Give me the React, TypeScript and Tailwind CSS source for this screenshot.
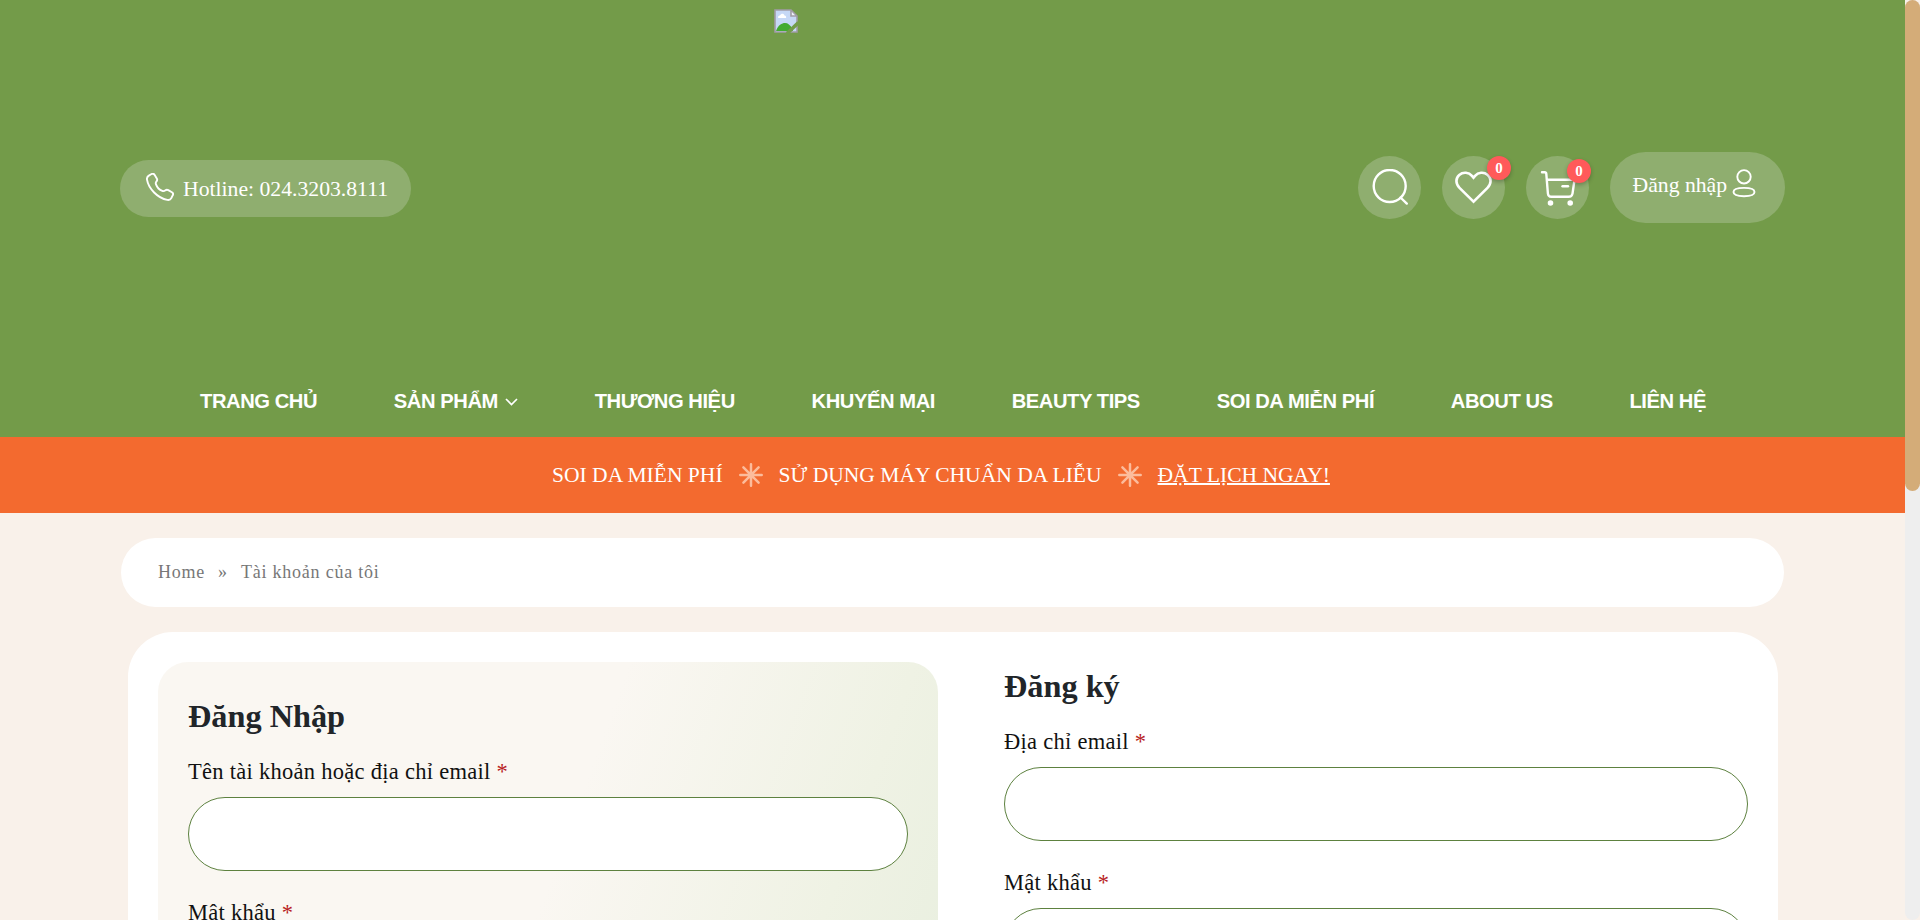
import React from "react";

const serif = "font-['Liberation_Serif',serif]";

const navItems = [
  { label: "TRANG CHỦ" },
  { label: "SẢN PHẨM", menu: true },
  { label: "THƯƠNG HIỆU" },
  { label: "KHUYẾN MẠI" },
  { label: "BEAUTY TIPS" },
  { label: "SOI DA MIỄN PHÍ" },
  { label: "ABOUT US" },
  { label: "LIÊN HỆ" },
];

function BrokenImage() {
  return (
    <svg width="24" height="24" viewBox="0 0 24 24" fill="none">
      <path d="M1 1H17L23 7V23H1Z" fill="#c6d8f6" />
      <path d="M2 22C4 16 8 14 11 14C14 14 16 16 18 19L19 22Z" fill="#43ab30" />
      <path d="M4 8.500C4 7 5 6.500 6 6.500C7 4 10 4 10.500 6.500C12 6.500 12.500 8 12 9H4.500Z" fill="#fff" />
      <path d="M17 1V7H23Z" fill="#eef2fa" />
      <path d="M17 1V7H23M17 1L23 7V23H1V1Z" stroke="#a19ca6" strokeWidth="1.600" />
      <path d="M24.500 13.500L13 24.500" stroke="#739b49" strokeWidth="3.600" />
    </svg>
  );
}

function PhoneIcon() {
  return (
    <svg width="28" height="28" viewBox="0 0 28 28" fill="none" stroke="#fff" strokeWidth="1.900" strokeLinejoin="round">
      <path d="M3.200 2.300L5.600 1C6.800 .4 8 .9 8.700 2L10.800 5.400C11.400 6.400 11.200 7.600 10.400 8.500C9.600 9.500 9.600 10.400 10 11.300C11 14 13.500 16.800 16.300 17.900C17.300 18.300 18.300 18.200 19.200 17.400C20.100 16.700 21.300 16.500 22.300 17.100L25.900 19.200C27 19.900 27.400 21.100 26.800 22.200L25.300 25.200C24.600 26.600 22.900 27.200 21.300 26.900C11.700 25.200 2.500 15.600 1 6.700C.7 4.900 1.500 3.200 3.200 2.300Z" />
    </svg>
  );
}

function SearchIcon() {
  return (
    <svg width="38" height="38" viewBox="0 0 38 38" fill="none" stroke="#fff" strokeWidth="2.400">
      <circle cx="18.700" cy="17" r="16" />
      <path d="M29.500 28.500L35.800 34.600" strokeLinecap="round" />
    </svg>
  );
}

function HeartIcon() {
  return (
    <svg width="37" height="33" viewBox="0 0 38 34" fill="none" stroke="#fff" strokeWidth="2.700">
      <path d="M19 31.500L4.600 17.400C.4 13.200 .4 7.300 4.300 4C8.500 .5 14.200 1.300 17.400 5L19 6.900L20.600 5C23.800 1.300 29.500 .5 33.700 4C37.600 7.300 37.600 13.200 33.400 17.400Z" />
    </svg>
  );
}

function CartIcon() {
  return (
    <svg width="36" height="36" viewBox="-0.5 -1 36 36" fill="none" stroke="#fff" strokeWidth="2.400" strokeLinecap="round" strokeLinejoin="round" className="overflow-visible">
      <path d="M1.500 1.200H4.200C5.200 1.200 5.700 1.800 5.800 2.800L7.400 22.500C7.600 24.600 8.800 25.800 10.800 25.800H28C30.300 25.800 31.600 24.700 32 22.600L34 8.800H6.500" />
      <path d="M22 15.300H27.500" />
      <circle cx="10" cy="32" r="1.900" fill="#fff" strokeWidth="1.800" />
      <circle cx="29.700" cy="32" r="1.900" fill="#fff" strokeWidth="1.800" />
    </svg>
  );
}

function UserIcon() {
  return (
    <svg width="24" height="29" viewBox="0 0 24 29" fill="none" stroke="#fff" strokeWidth="1.900">
      <circle cx="12" cy="7.800" r="6.700" />
      <path d="M12 18.900C18.800 18.900 22.500 20.300 22.500 23C22.500 25.700 18.800 27.200 12 27.200C5.200 27.200 1.500 25.700 1.500 23C1.500 20.300 5.200 18.900 12 18.900Z" />
    </svg>
  );
}

function StarIcon() {
  return (
    <svg width="24" height="24" viewBox="0 0 24 24" fill="none" stroke="#fcbc9c" strokeWidth="2.500" strokeLinecap="round" className="shrink-0">
      <path d="M12 1.300V22.700M1.300 12H22.700M4.400 4.400L19.600 19.600M19.600 4.400L4.400 19.600" />
    </svg>
  );
}

function Field({ label }: { label: string }) {
  return (
    <label className="flex flex-col">
      <span className="h-[33px] text-[22.500px] leading-[33px] tracking-[0.280px] text-[#111]">
        {label} <span className="text-[#b81c23]">*</span>
      </span>
      <input className="mt-[9px] h-[74px] w-full rounded-full border border-[#5d813f] bg-white px-8 outline-none" />
    </label>
  );
}

export default function App() {
  return (
    <div className={`flex h-[920px] w-[1920px] overflow-hidden bg-[#f9f1ea] ${serif}`}>
      <div className="flex h-full w-[1905px] flex-col overflow-hidden">
        <header className="flex h-[437px] shrink-0 flex-col bg-[#739b49] text-white">
          <div className="grid h-[375px] grid-cols-[1fr_357px_1fr] pl-[120px] pr-[120px]">
            <div className="flex items-center pt-0.5">
              <a className="flex h-[57px] w-[291px] items-center rounded-full bg-[#8fae6f] pl-[26px]">
                <span className="-mt-1"><PhoneIcon /></span>
                <span className="ml-[9px] mt-0.5 whitespace-nowrap text-[21.700px]">Hotline: 024.3203.8111</span>
              </a>
            </div>
            <div className="pt-[9px]"><BrokenImage /></div>
            <div className="flex items-center justify-end gap-[21px]">
              <button className="flex size-[63px] items-center justify-center rounded-full bg-[#8fae6f]">
                <SearchIcon />
              </button>
              <button className="relative flex size-[63px] items-center justify-center rounded-full bg-[#8fae6f]">
                <HeartIcon />
                <span className="absolute -right-1.5 top-0 flex size-6 items-center justify-center rounded-full bg-[#ff5a5a] text-[15px] font-bold shadow-[0_2px_4px_rgba(0,0,0,0.25)]">0</span>
              </button>
              <button className="relative flex size-[63px] items-center justify-center rounded-full bg-[#8fae6f]">
                <CartIcon />
                <span className="absolute -right-0.5 top-[3px] flex size-6 items-center justify-center rounded-full bg-[#ff5a5a] text-[15px] font-bold shadow-[0_2px_4px_rgba(0,0,0,0.25)]">0</span>
              </button>
              <a className="flex h-[71px] w-[175px] items-center rounded-full bg-[#8fae6f] pb-1 pl-[22.500px]">
                <span className="whitespace-nowrap text-[21.700px]">Đăng nhập</span>
                <span className="-mt-1 ml-[5px]"><UserIcon /></span>
              </a>
            </div>
          </div>
          <nav className="flex h-[52px] items-center justify-between pl-[200px] pr-[199px] font-['Liberation_Sans',sans-serif] text-[20.200px] font-bold tracking-[-0.450px]">
            {navItems.map((item) => (
              <a key={item.label} className="flex items-center whitespace-nowrap">
                {item.label}
                {item.menu && (
                  <svg width="13" height="8" viewBox="0 0 13 8" fill="none" stroke="#fff" strokeWidth="1.700" className="ml-[7px] mt-0.5">
                    <path d="M1 1L6.500 6.500L12 1" />
                  </svg>
                )}
              </a>
            ))}
          </nav>
        </header>

        <div className="flex h-[76px] shrink-0 items-center bg-[#f36a2f] pl-[552px] text-[21.560px] text-white">
          <span className="whitespace-nowrap">SOI DA MIỄN PHÍ</span>
          <span className="mx-4"><StarIcon /></span>
          <span className="whitespace-nowrap">SỬ DỤNG MÁY CHUẨN DA LIỄU</span>
          <span className="mx-4"><StarIcon /></span>
          <a className="whitespace-nowrap underline decoration-2">ĐẶT LỊCH NGAY!</a>
        </div>

        <main className="flex flex-col pl-[121px] pr-[121px] pt-[25px]">
          <div className="flex h-[69px] shrink-0 items-center gap-[13px] rounded-[35px] bg-white pl-[37px] text-[18px] tracking-[0.780px] text-[#777]">
            <a>Home</a>
            <span>»</span>
            <span>Tài khoản của tôi</span>
          </div>
          <section className="ml-[7px] mr-[6px] mt-[25px] flex h-[700px] shrink-0 rounded-t-[45px] bg-white px-[30px] pt-[30px] text-[#212529]">
            <form className="flex w-[780px] flex-col rounded-[30px] bg-[linear-gradient(110deg,#faf7f2_0%,#faf7f2_46%,#eff2e4_74%,#e4eddc_100%)] px-[30px] pt-[30px]">
              <h2 className="mb-[15px] h-[48px] text-[32.300px] font-bold leading-[48px]">Đăng Nhập</h2>
              <div className="flex flex-col gap-[25px]">
                <Field label="Tên tài khoản hoặc địa chỉ email" />
                <Field label="Mật khẩu" />
              </div>
            </form>
            <form className="ml-[66px] flex w-[744px] flex-col">
              <h2 className="mb-[15px] h-[48px] text-[32.300px] font-bold leading-[48px]">Đăng ký</h2>
              <div className="flex flex-col gap-[25px]">
                <Field label="Địa chỉ email" />
                <Field label="Mật khẩu" />
              </div>
            </form>
          </section>
        </main>
      </div>
      <div className="h-full w-[15px] rounded-full bg-[#eee]">
        <div className="h-[491px] w-full rounded-full bg-[#d4ac78]" />
      </div>
    </div>
  );
}
